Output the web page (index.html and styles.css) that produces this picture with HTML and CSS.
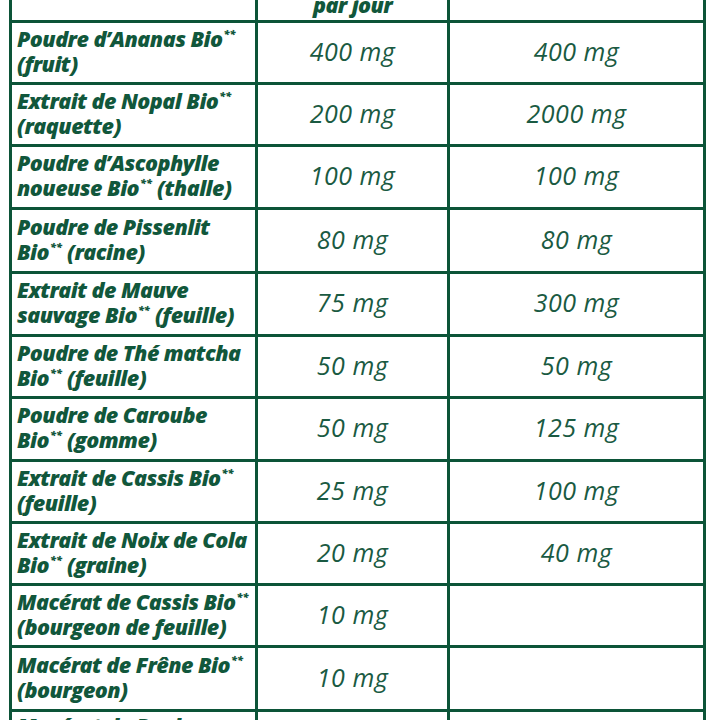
FILE: index.html
```html
<!DOCTYPE html>
<html lang="fr">
<head>
<meta charset="utf-8">
<title>Composition</title>
<link rel="stylesheet" href="styles.css">
</head>
<body>
<div class="table">
  <div class="cell head"></div>
  <div class="cell head val-head"><span>Quantité<br>par jour</span></div>
  <div class="cell head"></div>

  <div class="cell label"><span>Poudre d’Ananas Bio<sup>**</sup> (fruit)</span></div>
  <div class="cell value">400 mg</div>
  <div class="cell value">400 mg</div>

  <div class="cell label"><span>Extrait de Nopal Bio<sup>**</sup> (raquette)</span></div>
  <div class="cell value">200 mg</div>
  <div class="cell value">2000 mg</div>

  <div class="cell label"><span>Poudre d’Ascophylle noueuse Bio<sup>**</sup> (thalle)</span></div>
  <div class="cell value">100 mg</div>
  <div class="cell value">100 mg</div>

  <div class="cell label"><span>Poudre de Pissenlit Bio<sup>**</sup> (racine)</span></div>
  <div class="cell value">80 mg</div>
  <div class="cell value">80 mg</div>

  <div class="cell label"><span>Extrait de Mauve sauvage Bio<sup>**</sup> (feuille)</span></div>
  <div class="cell value">75 mg</div>
  <div class="cell value">300 mg</div>

  <div class="cell label"><span>Poudre de Thé matcha Bio<sup>**</sup> (feuille)</span></div>
  <div class="cell value">50 mg</div>
  <div class="cell value">50 mg</div>

  <div class="cell label"><span>Poudre de Caroube Bio<sup>**</sup> (gomme)</span></div>
  <div class="cell value">50 mg</div>
  <div class="cell value">125 mg</div>

  <div class="cell label"><span>Extrait de Cassis Bio<sup>**</sup> (feuille)</span></div>
  <div class="cell value">25 mg</div>
  <div class="cell value">100 mg</div>

  <div class="cell label"><span>Extrait de Noix de Cola Bio<sup>**</sup> (graine)</span></div>
  <div class="cell value">20 mg</div>
  <div class="cell value">40 mg</div>

  <div class="cell label"><span>Macérat de Cassis Bio<sup>**</sup> (bourgeon de feuille)</span></div>
  <div class="cell value">10 mg</div>
  <div class="cell value"></div>

  <div class="cell label"><span>Macérat de Frêne Bio<sup>**</sup> (bourgeon)</span></div>
  <div class="cell value">10 mg</div>
  <div class="cell value"></div>

  <div class="cell label top"><span>Macérat de Bouleau Bio<sup>**</sup> (bourgeon)</span></div>
  <div class="cell value">10 mg</div>
  <div class="cell value"></div>
</div>
</body>
</html>
```

FILE: styles.css
```css
html, body {
  margin: 0;
  padding: 0;
  background: #ffffff;
  overflow: hidden;
}

.table {
  display: grid;
  grid-template-columns: 243px 189px 253px;
  grid-template-rows: 50px 59px 59px 60px 61px 60px 59px 60px 59px 59px 59px 61px 60px;
  gap: 3px;
  padding: 3px;
  width: 697px;
  box-sizing: border-box;
  margin: -33px 0 0 9px;
  background: #0c5438;
}

.cell {
  background: #ffffff;
  color: #11573b;
  display: flex;
  align-items: center;
  box-sizing: border-box;
}

.head {
  align-items: flex-end;
}

.val-head {
  justify-content: center;
  text-align: center;
  font-family: "Open Sans", sans-serif;
  font-weight: 800;
  font-style: italic;
  font-size: 21.5px;
  line-height: 22px;
  letter-spacing: -0.6px;
  padding-bottom: 4px;
}

.label {
  padding: 0 2px 4px 5px;
  font-family: "Open Sans", sans-serif;
  font-weight: 800;
  font-style: italic;
  font-size: 21.5px;
  line-height: 25px;
  letter-spacing: -0.55px;
}

.label.top {
  align-items: flex-start;
  padding-top: 1px;
}

.label sup {
  font-size: 11px;
  line-height: 0;
  vertical-align: 9px;
  margin-left: 1px;
  letter-spacing: 0;
}

.value {
  justify-content: center;
  font-family: "Open Sans", sans-serif;
  font-weight: 400;
  font-style: italic;
  font-size: 25px;
  letter-spacing: 0.5px;
  color: #1a5a42;
  padding-bottom: 4px;
}
```
